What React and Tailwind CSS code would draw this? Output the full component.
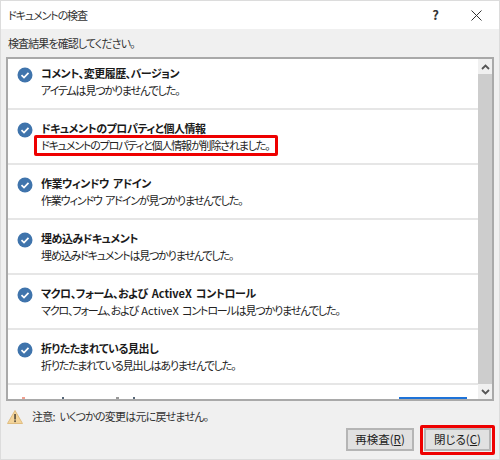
const font = { fontFamily: '"Noto Sans CJK JP", "Noto Sans", sans-serif' };

const rows = [
  ["コメント、変更履歴、バージョン", "アイテムは見つかりませんでした。"],
  ["ドキュメントのプロパティと個人情報", "ドキュメントのプロパティと個人情報が削除されました。", true],
  ["作業ウィンドウ アドイン", "作業ウィンドウ アドインが見つかりませんでした。"],
  ["埋め込みドキュメント", "埋め込みドキュメントは見つかりませんでした。"],
  ["マクロ、フォーム、および ActiveX コントロール", "マクロ、フォーム、および ActiveX コントロールは見つかりませんでした。"],
  ["折りたたまれている見出し", "折りたたまれている見出しはありませんでした。"],
];

// ActiveX keeps normal letter spacing, the kana around it are tightened
function Label({ text }) {
  const parts = text.split("ActiveX");
  if (parts.length === 1) return text;
  return (
    <>
      {parts[0]}
      <span className="tracking-normal">ActiveX</span>
      {parts[1]}
    </>
  );
}

function CheckIcon() {
  return (
    <svg width="16" height="16" viewBox="0 0 16 16" className="shrink-0">
      <circle cx="8" cy="8" r="7.5" fill="#3f74ac" />
      <path d="M4.5 8.2 7 10.6 11.5 5.8" fill="none" stroke="#fff" strokeWidth="1.7" />
    </svg>
  );
}

function WarnIcon() {
  return (
    <svg width="16" height="14" viewBox="0 0 16 14" className="shrink-0">
      <path d="M8 .5 15.5 13.5H.5Z" fill="#f3d49a" stroke="#e0bd80" strokeWidth="1" />
      <rect x="7.2" y="4" width="1.7" height="5.5" fill="#5a5040" />
      <rect x="7.2" y="10.3" width="1.7" height="1.8" fill="#5a5040" />
    </svg>
  );
}

function Row({ title, desc, marked }) {
  return (
    <div className="h-[55px] shrink-0 border-b-2 border-[#e6e6e6] flex pl-[9px] pt-[10px] gap-[8px]">
      <div className="pt-[2px]"><CheckIcon /></div>
      <div className="min-w-0">
        <div className="text-[11px] leading-[17px] font-bold text-[#1a1a1a] [font-feature-settings:'palt'] tracking-[-0.5px] [word-spacing:2px] whitespace-pre">
          <Label text={title} />
        </div>
        {marked ? (
          <div className="relative text-[11px] leading-[17px] text-[#222] [font-feature-settings:'palt'] tracking-[-1.15px] [word-spacing:2px] whitespace-pre">
            {desc}
            <div className="absolute left-[-7px] top-[-2px] w-[244px] h-[21px] border-[3px] border-[#ee0000] rounded-[2px]" />
          </div>
        ) : (
          <div className="text-[11px] leading-[17px] text-[#222] [font-feature-settings:'palt'] tracking-[-1.15px] [word-spacing:2px] whitespace-pre">
            <Label text={desc} />
          </div>
        )}
      </div>
    </div>
  );
}

export default function App() {
  return (
    <div style={font} className="w-[500px] h-[460px] bg-[#f0f0f0] border border-[#dcdcdc] flex flex-col overflow-hidden">
      <div className="h-[28px] bg-white shrink-0 flex items-center pl-[7px] pr-[17px]">
        <span className="text-[11px] text-[#333] [font-feature-settings:'palt'] tracking-[-1.1px] flex-1">ドキュメントの検査</span>
        <span className="text-[13px] font-bold text-[#333] mr-[32px]">?</span>
        <svg width="11" height="11" viewBox="0 0 11 11">
          <path d="M.5.5 10.5 10.5M10.5.5.5 10.5" stroke="#333" strokeWidth="1" />
        </svg>
      </div>
      <div className="h-[28px] shrink-0 flex items-center pl-[7px] text-[11px] text-[#333] [font-feature-settings:'palt'] tracking-[-0.9px]">
        検査結果を確認してください。
      </div>
      <div className="mx-[5px] h-[344px] shrink-0 bg-white border-2 border-[#a9a9a9] flex overflow-hidden">
        <div className="flex-1 min-w-0 overflow-hidden">
          <div className="-mt-[4px] flex flex-col">
            {rows.map((r) => (
              <Row key={r[0]} title={r[0]} desc={r[1]} marked={r[2]} />
            ))}
            {/* next row, only its top pixels are visible */}
            <div className="relative h-[14px] shrink-0">
              <div className="absolute left-[14px] top-[12px] w-[3px] h-[2px] bg-[#f0a090]" />
              <div className="absolute left-[54px] top-[12px] w-[2px] h-[2px] bg-[#556677]" />
              <div className="absolute left-[108px] top-[12px] w-[3px] h-[2px] bg-[#999999]" />
              <div className="absolute left-[125px] top-[12px] w-[2px] h-[2px] bg-[#556677]" />
              <div className="absolute left-[391px] top-[12px] w-[68px] h-[2px] bg-[#1e73d8]" />
            </div>
          </div>
        </div>
        <div className="w-[14px] shrink-0 bg-[#cdcdcd] flex flex-col justify-between">
          <div className="h-[15px] bg-[#f0f0f0] flex items-center justify-center">
            <svg width="9" height="6" viewBox="0 0 9 6"><path d="M1 5 4.5 1.5 8 5" fill="none" stroke="#555" strokeWidth="1.8" /></svg>
          </div>
          <div className="h-[15px] bg-[#f0f0f0] flex items-center justify-center">
            <svg width="9" height="6" viewBox="0 0 9 6"><path d="M1 1 4.5 4.5 8 1" fill="none" stroke="#555" strokeWidth="1.8" /></svg>
          </div>
        </div>
      </div>
      <div className="flex items-center gap-[9px] pl-[6px] pt-[4px] h-[27px] text-[11px] text-[#333] [font-feature-settings:'palt'] tracking-[-0.8px] [word-spacing:3px]">
        <WarnIcon />
        <span className="whitespace-pre">注意: いくつかの変更は元に戻せません。</span>
      </div>
      <div className="flex justify-end gap-[10px] pr-[8px]">
        <button className="w-[68px] h-[23px] bg-[#e1e1e1] border-2 border-[#b5b5b5] text-[11.5px] text-[#222] [font-feature-settings:'palt'] flex items-center justify-center">
          再検査(<span className="underline">R</span>)
        </button>
        <div className="relative">
          <button className="w-[67px] h-[23px] bg-[#e1e1e1] border-2 border-[#b5b5b5] text-[11.5px] text-[#222] [font-feature-settings:'palt'] flex items-center justify-center">
            閉じる(<span className="underline">C</span>)
          </button>
          <div className="absolute left-[-4px] top-[-3px] w-[75px] h-[30px] border-[3px] border-[#ee0000] rounded-[2px]" />
        </div>
      </div>
    </div>
  );
}
